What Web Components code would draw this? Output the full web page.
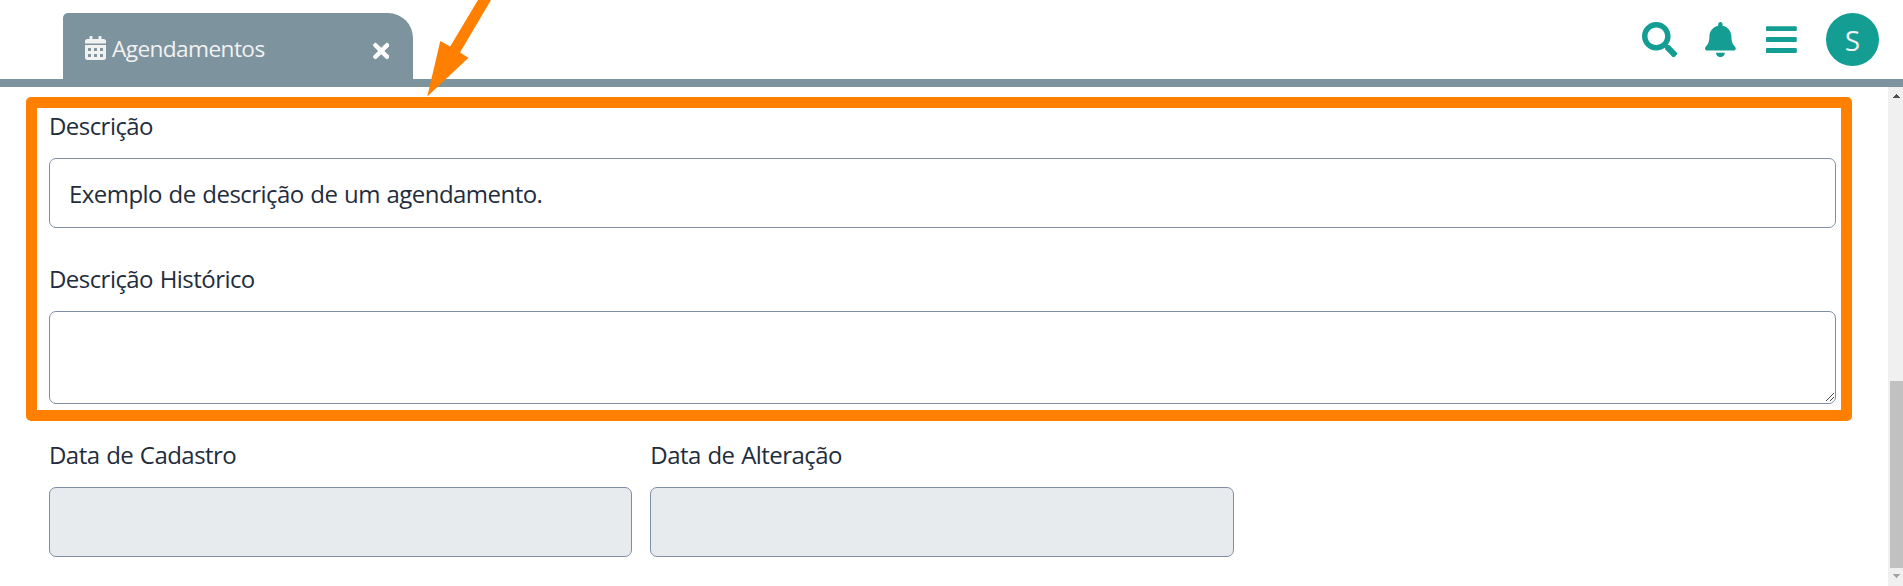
<!DOCTYPE html>
<html lang="pt-BR">
<head>
<meta charset="utf-8">
<title>Agendamentos</title>
<style>
html,body{margin:0;height:100%;overflow:hidden;background:#fff}
body{font-family:"Open Sans","Noto Sans",sans-serif;font-size:24px;color:#1f2d3d}
</style>
</head>
<body>
<app-shell>
  <app-header slot="header">
    <app-tab>Agendamentos</app-tab>
    <app-icon slot="actions" name="search"></app-icon>
    <app-icon slot="actions" name="bell"></app-icon>
    <app-icon slot="actions" name="bars"></app-icon>
    <user-avatar slot="actions">S</user-avatar>
  </app-header>
  <form-row>
    <form-field label="Descrição">Exemplo de descrição de um agendamento.</form-field>
  </form-row>
  <form-row>
    <form-field label="Descrição Histórico" multiline></form-field>
  </form-row>
  <form-row columns="3">
    <form-field label="Data de Cadastro" readonly></form-field>
    <form-field label="Data de Alteração" readonly></form-field>
  </form-row>
  <scroll-track slot="scroll"></scroll-track>
</app-shell>
<callout-mark></callout-mark>
<script>
const define = (name, html, setup) => customElements.define(name, class extends HTMLElement {
  constructor() {
    super();
    const t = document.createElement('template');
    t.innerHTML = html;
    this.attachShadow({mode: 'open'}).append(t.content.cloneNode(true));
  }
  connectedCallback() { if (setup) setup(this, this.shadowRoot); }
});

const icons = {
  search: [512, 'M505 442.7L405.3 343c-4.500-4.500-10.600-7-17-7H372c27.600-35.300 44-79.700 44-128C416 93.100 322.900 0 208 0S0 93.100 0 208s93.100 208 208 208c48.300 0 92.700-16.400 128-44v16.300c0 6.400 2.500 12.500 7 17l99.700 99.700c9.400 9.400 24.600 9.400 33.900 0l28.300-28.300c9.400-9.400 9.400-24.600.1-34zM208 336c-70.700 0-128-57.200-128-128 0-70.700 57.200-128 128-128 70.700 0 128 57.200 128 128 0 70.700-57.200 128-128 128z'],
  bell: [448, 'M224 512c35.320 0 63.970-28.650 63.970-64H160.030c0 35.350 28.650 64 63.970 64zm215.390-149.710c-19.320-20.760-55.470-51.990-55.470-154.290 0-77.700-54.480-139.900-127.940-155.160V32c0-17.670-14.320-32-31.980-32s-31.980 14.330-31.980 32v20.840C118.560 68.100 64.080 130.300 64.080 208c0 102.300-36.150 133.530-55.470 154.290-6 6.450-8.660 14.160-8.610 21.710.11 16.400 12.980 32 32.100 32h383.800c19.120 0 32-15.600 32.100-32 .05-7.550-2.610-15.270-8.610-21.710z'],
  bars: [448, 'M16 132h416c8.837 0 16-7.163 16-16V76c0-8.837-7.163-16-16-16H16C7.163 60 0 67.163 0 76v40c0 8.837 7.163 16 16 16zm0 160h416c8.837 0 16-7.163 16-16v-40c0-8.837-7.163-16-16-16H16c-8.837 0-16 7.163-16 16v40c0 8.837 7.163 16 16 16zm0 160h416c8.837 0 16-7.163 16-16v-40c0-8.837-7.163-16-16-16H16c-8.837 0-16 7.163-16 16v40c0 8.837 7.163 16 16 16z'],
  times: [352, 'M242.72 256l100.070-100.070c12.280-12.280 12.280-32.190 0-44.480l-22.240-22.240c-12.280-12.280-32.190-12.280-44.480 0L176 189.280 75.930 89.210c-12.280-12.280-32.190-12.280-44.480 0L9.210 111.450c-12.280 12.280-12.280 32.190 0 44.480L109.280 256 9.210 356.070c-12.280 12.280-12.280 32.190 0 44.480l22.240 22.240c12.280 12.280 32.200 12.280 44.480 0L176 322.720l100.070 100.070c12.280 12.280 32.200 12.280 44.480 0l22.240-22.240c12.280-12.280 12.280-32.190 0-44.480L242.720 256z'],
  calendar: [448, 'M0 464c0 26.500 21.500 48 48 48h352c26.500 0 48-21.500 48-48V192H0v272zm320-196c0-6.600 5.400-12 12-12h40c6.600 0 12 5.400 12 12v40c0 6.600-5.400 12-12 12h-40c-6.600 0-12-5.400-12-12v-40zm0 128c0-6.600 5.400-12 12-12h40c6.600 0 12 5.400 12 12v40c0 6.600-5.400 12-12 12h-40c-6.600 0-12-5.400-12-12v-40zM192 268c0-6.600 5.400-12 12-12h40c6.600 0 12 5.400 12 12v40c0 6.600-5.400 12-12 12h-40c-6.600 0-12-5.400-12-12v-40zm0 128c0-6.600 5.400-12 12-12h40c6.600 0 12 5.400 12 12v40c0 6.600-5.400 12-12 12h-40c-6.600 0-12-5.400-12-12v-40zM64 268c0-6.600 5.400-12 12-12h40c6.600 0 12 5.400 12 12v40c0 6.600-5.400 12-12 12H76c-6.600 0-12-5.400-12-12v-40zm0 128c0-6.600 5.400-12 12-12h40c6.600 0 12 5.400 12 12v40c0 6.600-5.400 12-12 12H76c-6.600 0-12-5.400-12-12v-40zM400 64h-48V16c0-8.800-7.200-16-16-16h-32c-8.800 0-16 7.200-16 16v48H160V16c0-8.800-7.200-16-16-16h-32c-8.800 0-16 7.200-16 16v48H48C21.500 64 0 85.500 0 112v48h448v-48c0-26.500-21.500-48-48-48z']
};

define('app-icon', `<style>:host{display:block;height:35.2px}:host([name="bell"]){margin:0 1px 0 -1px}svg{display:block;height:100%;fill:currentColor}</style><svg><path/></svg>`, (el, root) => {
  const [w, d] = icons[el.getAttribute('name')];
  root.querySelector('svg').setAttribute('viewBox', `0 0 ${w} 512`);
  root.querySelector('svg').style.aspectRatio = `${w} / 512`;
  root.querySelector('path').setAttribute('d', d);
});

define('app-tab', `<style>
:host{display:flex;box-sizing:border-box;width:350px;height:66px;padding:6px 24px 0 22px;align-items:center;background:#7d939e;color:#f1f1f1;border-radius:5px 25px 0 0}
.label{flex:1;margin-left:6px;font-size:22.700px;letter-spacing:-.62px;line-height:32px;white-space:nowrap}
app-icon{height:24px}.cal{margin-top:-3px}.x{color:#fff;margin-top:4px}
</style><app-icon class="cal" name="calendar"></app-icon><span class="label"><slot></slot></span><app-icon class="x" name="times"></app-icon>`);

define('user-avatar', `<style>:host{display:flex;width:53px;height:53px;border-radius:50%;background:#149d93;color:#f1f1f1;align-items:center;justify-content:center;font-size:28px;line-height:1}</style><slot></slot>`);

define('app-header', `<style>
:host{display:flex;box-sizing:border-box;height:87px;padding:13px 24px 0 63px;border-bottom:8px solid #7d939e;justify-content:space-between;align-items:flex-start}
.actions{display:flex;gap:29px;height:53px;align-items:center;color:#149d93}
</style><slot></slot><div class="actions"><slot name="actions"></slot></div>`);

define('app-shell', `<style>
:host{display:flex;flex-direction:column;height:586px;overflow:hidden}
.body{flex:1;display:flex;min-height:0}
main{flex:1;padding:22px 52px 0 49px;display:flex;flex-direction:column}
</style><slot name="header"></slot><div class="body"><main><slot></slot></main><slot name="scroll"></slot></div>`);

define('form-row', `<style>
:host{display:grid;grid-template-columns:1fr;column-gap:18px}
:host([columns="3"]){grid-template-columns:repeat(3,1fr);padding-right:1px}
</style><slot></slot>`);

define('form-field', `<style>
:host{display:block;margin-bottom:34px;white-space:nowrap;letter-spacing:-.55px;word-spacing:1px}
label{display:block;height:33px;line-height:33px;margin-bottom:16px}
.box{box-sizing:border-box;height:70px;border:1px solid #7f8ea6;border-radius:7px;padding:0 19px;line-height:69px}
:host([multiline]) .box{height:93px;display:flex;align-items:flex-end;justify-content:flex-end;padding:0 1px 1px 0}
:host([readonly]) .box{background:#e8ebee}
svg{display:none}:host([multiline]) svg{display:block}
</style><label></label><div class="box"><slot></slot><svg width="9" height="9" viewBox="0 0 9 9" shape-rendering="crispEdges" stroke="#444" fill="none"><path d="M.5 8.500L8.500 .500M4.500 8.500L8.500 4.500"/></svg></div>`, (el, root) => {
  root.querySelector('label').textContent = el.getAttribute('label');
});

define('scroll-track', `<style>
:host{box-sizing:border-box;width:15px;background:#f0f0f0;display:flex;flex-direction:column;align-items:flex-end;justify-content:space-between}
svg{display:block;margin-right:3px}.top{margin-top:7px;flex:1}.up{height:4px}
.thumb{width:13px;height:187px;background:#c1c1c1}
.down{margin:6px 3px 8px 0}
</style><div class="top"><svg class="up" width="7" height="4" shape-rendering="crispEdges"><path d="M3 0h1v1h1v1h1v1h1v1H0V3h1V2h1V1h1z" fill="#505050"/></svg></div><div class="thumb"></div><svg class="down" width="7" height="4" shape-rendering="crispEdges"><path d="M0 0h7v1H6v1H5v1H4v1H3V3H2V2H1V1H0z" fill="#a3a3a3"/></svg>`);

define('callout-mark', `<style>
:host{position:absolute;inset:0;pointer-events:none}
.frame{position:absolute;left:26px;top:97px;width:1826px;height:324px;box-sizing:border-box;border:11px solid #ff8000;border-radius:5px}
svg{position:absolute;left:0;top:0}
</style><svg width="520" height="100"><path d="M478 0h13L460 52.500l8.500 5.200L427.300 96.500 440.300 41l9.900 5.500z" fill="#ff8000"/></svg><div class="frame"></div>`);
</script>
</body>
</html>
